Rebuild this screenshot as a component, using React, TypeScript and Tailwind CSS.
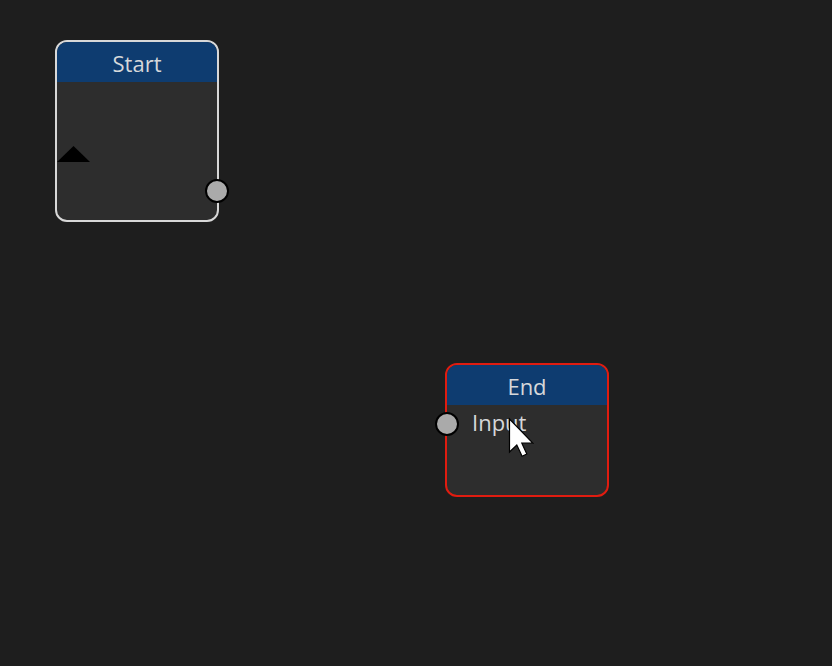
import type { ReactNode } from "react";

type GraphNodeProps = {
  title: string;
  place: string;
  frame: string;
  children: ReactNode;
};

function GraphNode({ title, place, frame, children }: GraphNodeProps) {
  return (
    <section aria-label={title} className={`absolute w-[164px] rounded-xl border-2 bg-[#2d2d2d] ${place} ${frame}`}>
      <h2 className="h-10 rounded-t-[10px] bg-[#0e3c70] text-center text-[22px] leading-[42px]">{title}</h2>
      {children}
    </section>
  );
}

function Port({ label, place }: { label: string; place: string }) {
  return (
    <button
      type="button"
      aria-label={label}
      className={`absolute size-6 rounded-full border-2 border-black bg-[#aaaaaa] ${place}`}
    />
  );
}

export default function App() {
  return (
    <main className="relative h-screen w-full cursor-default overflow-hidden bg-[#1e1e1e] font-['Open_Sans','Noto_Sans',sans-serif] text-[#d6d8da]">
      <GraphNode title="Start" place="left-[55px] top-10 h-[182px]" frame="border-[#d8d8d8]">
        <svg className="mt-16 h-4 w-[33px]" viewBox="0 0 33 16" aria-hidden="true">
          <path d="M0 16 16.5 0 33 16z" fill="#000" />
        </svg>
        <Port label="Start output" place="-right-3 bottom-[17px]" />
      </GraphNode>

      <GraphNode title="End" place="left-[445px] top-[363px] h-[134px]" frame="border-[#e01c10]">
        <p className="pl-[25px] text-[22px] leading-[34px]">Input</p>
        <Port label="End input" place="-left-3 top-[47px]" />
      </GraphNode>

      <svg className="pointer-events-none absolute left-[508px] top-[417px] h-[42px] w-[28px]" viewBox="0 0 28 42" aria-hidden="true">
        <path
          d="M1.5 2v33l7.3-7 5.3 11.2 4.7-2.2-5-10.8h11z"
          fill="#fff"
          stroke="#000"
          strokeWidth="1.2"
        />
      </svg>
    </main>
  );
}
